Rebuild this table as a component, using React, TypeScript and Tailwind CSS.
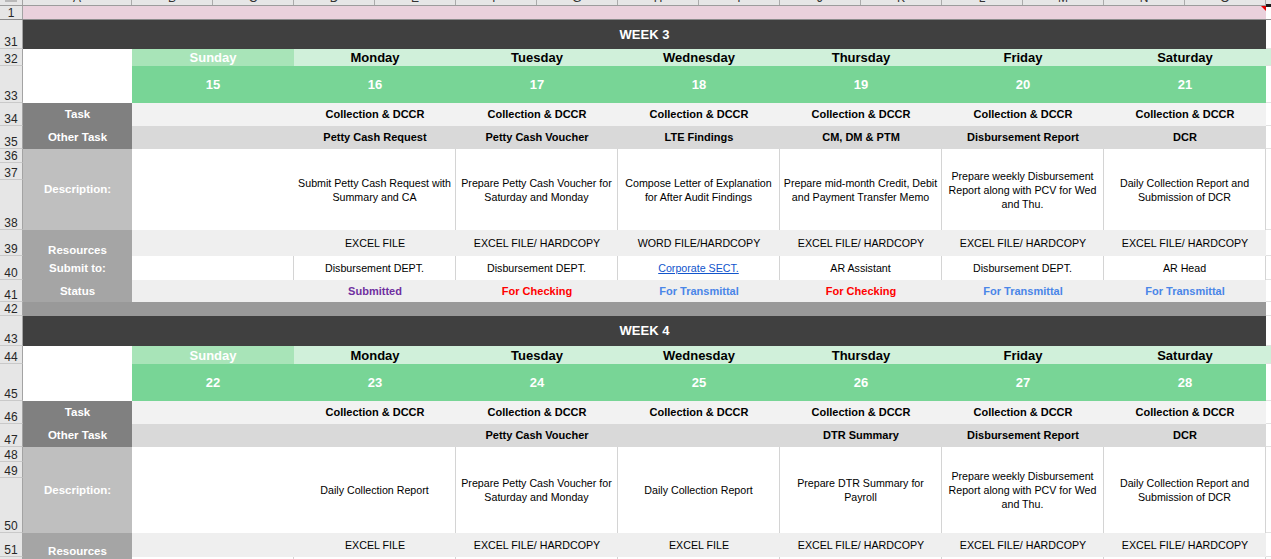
import React from "react";

type N = { n: string; h: string };

function RowNum({ n, h }: { n: string; h?: string }) {
  return (
    <div
      className={`${h ?? ""} w-[23px] shrink-0 bg-[#e6e6e6] border-r border-r-[#a3a3a3] border-b border-b-[#c9c9c9] flex items-end justify-center text-[12px] leading-[12px] text-[#262626]`}
    >
      {n}
    </div>
  );
}

function SheetRow({
  h,
  nums,
  children,
  right = "bg-white",
}: {
  h: string;
  nums: N[];
  children: React.ReactNode;
  right?: string;
}) {
  return (
    <div className={`flex ${h}`}>
      {nums.length === 1 ? (
        <RowNum n={nums[0].n} />
      ) : (
        <div className="flex flex-col w-[23px] shrink-0">
          {nums.map((x) => (
            <RowNum key={x.n} n={x.n} h={x.h} />
          ))}
        </div>
      )}
      <div className="flex w-[1243px] shrink-0">{children}</div>
      <div className={`w-[5px] shrink-0 border-b border-b-[#e2e2e2] ${right}`} />
    </div>
  );
}

function Label({
  bg,
  children,
  align = "items-center",
}: {
  bg: string;
  children?: React.ReactNode;
  align?: string;
}) {
  return (
    <div
      className={`w-[109px] shrink-0 flex justify-center ${align} ${bg} text-white font-bold text-[11.5px] leading-[13px]`}
    >
      {children}
    </div>
  );
}

function Cell({
  className = "",
  children,
}: {
  className?: string;
  children?: React.ReactNode;
}) {
  return (
    <div
      className={`w-[162px] shrink-0 flex items-center justify-center text-center px-[3px] ${className}`}
    >
      {children}
    </div>
  );
}

const DAYS = ["Sunday", "Monday", "Tuesday", "Wednesday", "Thursday", "Friday", "Saturday"];

type WeekProps = {
  title: string;
  rTitle: N;
  rDays: N;
  rDates: N;
  rTask: N;
  rOther: N;
  rDesc: N[];
  descH: string;
  rRes: N;
  rSubmit: N;
  rStatus?: N;
  rGap?: N;
  dates: number[];
  tasks: string[];
  others: string[];
  descs: string[];
  res: string[];
  submits: React.ReactNode[];
  statuses?: React.ReactNode[];
};

const Red = ({ children }: { children: React.ReactNode }) => (
  <span className="text-[#ff0000]">{children}</span>
);
const Blue = ({ children }: { children: React.ReactNode }) => (
  <span className="text-[#4a86e8]">{children}</span>
);
const Purple = ({ children }: { children: React.ReactNode }) => (
  <span className="text-[#7030a0]">{children}</span>
);

function Week(p: WeekProps) {
  return (
    <>
      <SheetRow h={p.rTitle.h} nums={[p.rTitle]}>
        <div className="w-[1243px] bg-[#404040] flex items-center justify-center text-white font-bold text-[13px]">
          {p.title}
        </div>
      </SheetRow>
      <SheetRow h={p.rDays.h} nums={[p.rDays]} right="bg-[#d0f0da]">
        <div className="w-[109px] shrink-0 bg-white" />
        {DAYS.map((d, i) => (
          <Cell
            key={d}
            className={`font-bold text-[13px] leading-[15px] ${
              i === 0 ? "bg-[#a8e4b8] text-white" : "bg-[#d0f0da] text-black"
            }`}
          >
            {d}
          </Cell>
        ))}
      </SheetRow>
      <SheetRow h={p.rDates.h} nums={[p.rDates]}>
        <div className="w-[109px] shrink-0 bg-white" />
        {p.dates.map((d) => (
          <Cell key={d} className="bg-[#78d596] text-white font-bold text-[13px]">
            {d}
          </Cell>
        ))}
      </SheetRow>
      <SheetRow h={p.rTask.h} nums={[p.rTask]}>
        <Label bg="bg-[#808080]">Task</Label>
        {p.tasks.map((t, i) => (
          <Cell key={i} className="bg-[#f2f2f2] text-black font-bold text-[11px]">
            {t}
          </Cell>
        ))}
      </SheetRow>
      <SheetRow h={p.rOther.h} nums={[p.rOther]}>
        <Label bg="bg-[#808080]">Other Task</Label>
        {p.others.map((t, i) => (
          <Cell key={i} className="bg-[#d9d9d9] text-black font-bold text-[11px]">
            {t}
          </Cell>
        ))}
      </SheetRow>
      <SheetRow h={p.descH} nums={p.rDesc}>
        <Label bg="bg-[#bfbfbf]">Description:</Label>
        {p.descs.map((t, i) => (
          <Cell
            key={i}
            className={`bg-white text-black text-[10.67px] leading-[14px] ${
              i === 0 ? "" : "border-r border-r-[#d4d4d4]"
            }`}
          >
            {t}
          </Cell>
        ))}
      </SheetRow>
      <SheetRow h={p.rRes.h} nums={[p.rRes]}>
        <Label bg="bg-[#a5a5a5]" align="items-end">
          <span className="leading-[12px]">Resources</span>
        </Label>
        {p.res.map((t, i) => (
          <Cell key={i} className="bg-[#efefef] text-black text-[10.67px]">
            {t}
          </Cell>
        ))}
      </SheetRow>
      <SheetRow h={p.rSubmit.h} nums={[p.rSubmit]}>
        <Label bg="bg-[#a5a5a5]">{p.statuses ? "Submit to:" : ""}</Label>
        {p.submits.map((t, i) => (
          <Cell
            key={i}
            className="bg-white text-black text-[10.67px] border-r border-r-[#d4d4d4]"
          >
            {t}
          </Cell>
        ))}
      </SheetRow>
      {p.rStatus && p.statuses && (
        <SheetRow h={p.rStatus.h} nums={[p.rStatus]}>
          <Label bg="bg-[#a5a5a5]">Status</Label>
          {p.statuses.map((t, i) => (
            <Cell key={i} className="bg-[#efefef] font-bold text-[11px]">
              {t}
            </Cell>
          ))}
        </SheetRow>
      )}
      {p.rGap && (
        <SheetRow h={p.rGap.h} nums={[p.rGap]}>
          <div className="w-[1243px] bg-[#999999]" />
        </SheetRow>
      )}
    </>
  );
}

const COLS = ["B", "C", "D", "E", "F", "G", "H", "I", "J", "K", "L", "M", "N", "O"];

export default function App() {
  const cd = "Collection & DCCR";
  return (
    <div className="w-[1271px] h-[559px] overflow-hidden bg-white font-['Liberation_Sans',Arial,sans-serif] text-black">
      {/* column header */}
      <div className="flex h-[6px] bg-[#e6e6e6] border-b border-b-[#9c9c9c] overflow-hidden">
        <div className="w-[23px] shrink-0 border-r border-r-[#a3a3a3] flex justify-center">
          <div className="w-[12px] h-[2px] bg-[#b9b9b9]" />
        </div>
        <div className="w-[109px] shrink-0 border-r border-r-[#ababab] flex justify-center">
          <span className="-mt-[8px] text-[12px] leading-[12px] text-[#333]">A</span>
        </div>
        {COLS.map((c) => (
          <div
            key={c}
            className="w-[81px] shrink-0 border-r border-r-[#ababab] flex justify-center"
          >
            <span className="-mt-[8px] text-[12px] leading-[12px] text-[#333]">{c}</span>
          </div>
        ))}
        <div className="w-[5px] shrink-0" />
      </div>

      {/* row 1 (frozen) */}
      <div className="flex h-[14px] border-b border-b-[#8c8c8c]">
        <div className="w-[23px] shrink-0 bg-[#e6e6e6] border-r border-r-[#a3a3a3] flex items-end justify-center text-[12px] leading-[12px] text-[#262626]">
          1
        </div>
        <div className="relative w-[1243px] shrink-0 bg-[#ead1dc]">
          <div className="absolute right-0 top-0 w-0 h-0 border-t-[5px] border-t-[#e00000] border-l-[5px] border-l-transparent" />
        </div>
        <div className="relative w-[5px] shrink-0 bg-white">
          <div className="absolute left-0 top-[-2px] w-[5px] h-[3px] bg-[#1b1b1b]" />
        </div>
      </div>

      <Week
        title="WEEK 3"
        rTitle={{ n: "31", h: "h-[29px]" }}
        rDays={{ n: "32", h: "h-[17px]" }}
        rDates={{ n: "33", h: "h-[37px]" }}
        rTask={{ n: "34", h: "h-[23px]" }}
        rOther={{ n: "35", h: "h-[23px]" }}
        rDesc={[
          { n: "36", h: "h-[14px]" },
          { n: "37", h: "h-[17px]" },
          { n: "38", h: "h-[50px]" },
        ]}
        descH="h-[81px]"
        rRes={{ n: "39", h: "h-[26px]" }}
        rSubmit={{ n: "40", h: "h-[24px]" }}
        rStatus={{ n: "41", h: "h-[22px]" }}
        rGap={{ n: "42", h: "h-[14px]" }}
        dates={[15, 16, 17, 18, 19, 20, 21]}
        tasks={["", cd, cd, cd, cd, cd, cd]}
        others={[
          "",
          "Petty Cash Request",
          "Petty Cash Voucher",
          "LTE Findings",
          "CM, DM & PTM",
          "Disbursement Report",
          "DCR",
        ]}
        descs={[
          "",
          "Submit Petty Cash Request with Summary and CA",
          "Prepare Petty Cash Voucher for Saturday and Monday",
          "Compose Letter of Explanation for After Audit Findings",
          "Prepare mid-month Credit, Debit and Payment Transfer Memo",
          "Prepare weekly Disbursement Report along with PCV for Wed and Thu.",
          "Daily Collection Report and Submission of DCR",
        ]}
        res={[
          "",
          "EXCEL FILE",
          "EXCEL FILE/ HARDCOPY",
          "WORD FILE/HARDCOPY",
          "EXCEL FILE/ HARDCOPY",
          "EXCEL FILE/ HARDCOPY",
          "EXCEL FILE/ HARDCOPY",
        ]}
        submits={[
          "",
          "Disbursement DEPT.",
          "Disbursement DEPT.",
          <span className="text-[#1155cc] underline">Corporate SECT.</span>,
          "AR Assistant",
          "Disbursement DEPT.",
          "AR Head",
        ]}
        statuses={[
          "",
          <Purple>Submitted</Purple>,
          <Red>For Checking</Red>,
          <Blue>For Transmittal</Blue>,
          <Red>For Checking</Red>,
          <Blue>For Transmittal</Blue>,
          <Blue>For Transmittal</Blue>,
        ]}
      />

      <Week
        title="WEEK 4"
        rTitle={{ n: "43", h: "h-[30px]" }}
        rDays={{ n: "44", h: "h-[18px]" }}
        rDates={{ n: "45", h: "h-[37px]" }}
        rTask={{ n: "46", h: "h-[23px]" }}
        rOther={{ n: "47", h: "h-[23px]" }}
        rDesc={[
          { n: "48", h: "h-[15px]" },
          { n: "49", h: "h-[16px]" },
          { n: "50", h: "h-[55px]" },
        ]}
        descH="h-[86px]"
        rRes={{ n: "51", h: "h-[24px]" }}
        rSubmit={{ n: "52", h: "h-[24px]" }}
        dates={[22, 23, 24, 25, 26, 27, 28]}
        tasks={["", cd, cd, cd, cd, cd, cd]}
        others={["", "", "Petty Cash Voucher", "", "DTR Summary", "Disbursement Report", "DCR"]}
        descs={[
          "",
          "Daily Collection Report",
          "Prepare Petty Cash Voucher for Saturday and Monday",
          "Daily Collection Report",
          "Prepare DTR Summary for Payroll",
          "Prepare weekly Disbursement Report along with PCV for Wed and Thu.",
          "Daily Collection Report and Submission of DCR",
        ]}
        res={[
          "",
          "EXCEL FILE",
          "EXCEL FILE/ HARDCOPY",
          "EXCEL FILE",
          "EXCEL FILE/ HARDCOPY",
          "EXCEL FILE/ HARDCOPY",
          "EXCEL FILE/ HARDCOPY",
        ]}
        submits={["", "", "", "", "", "", ""]}
      />
    </div>
  );
}
